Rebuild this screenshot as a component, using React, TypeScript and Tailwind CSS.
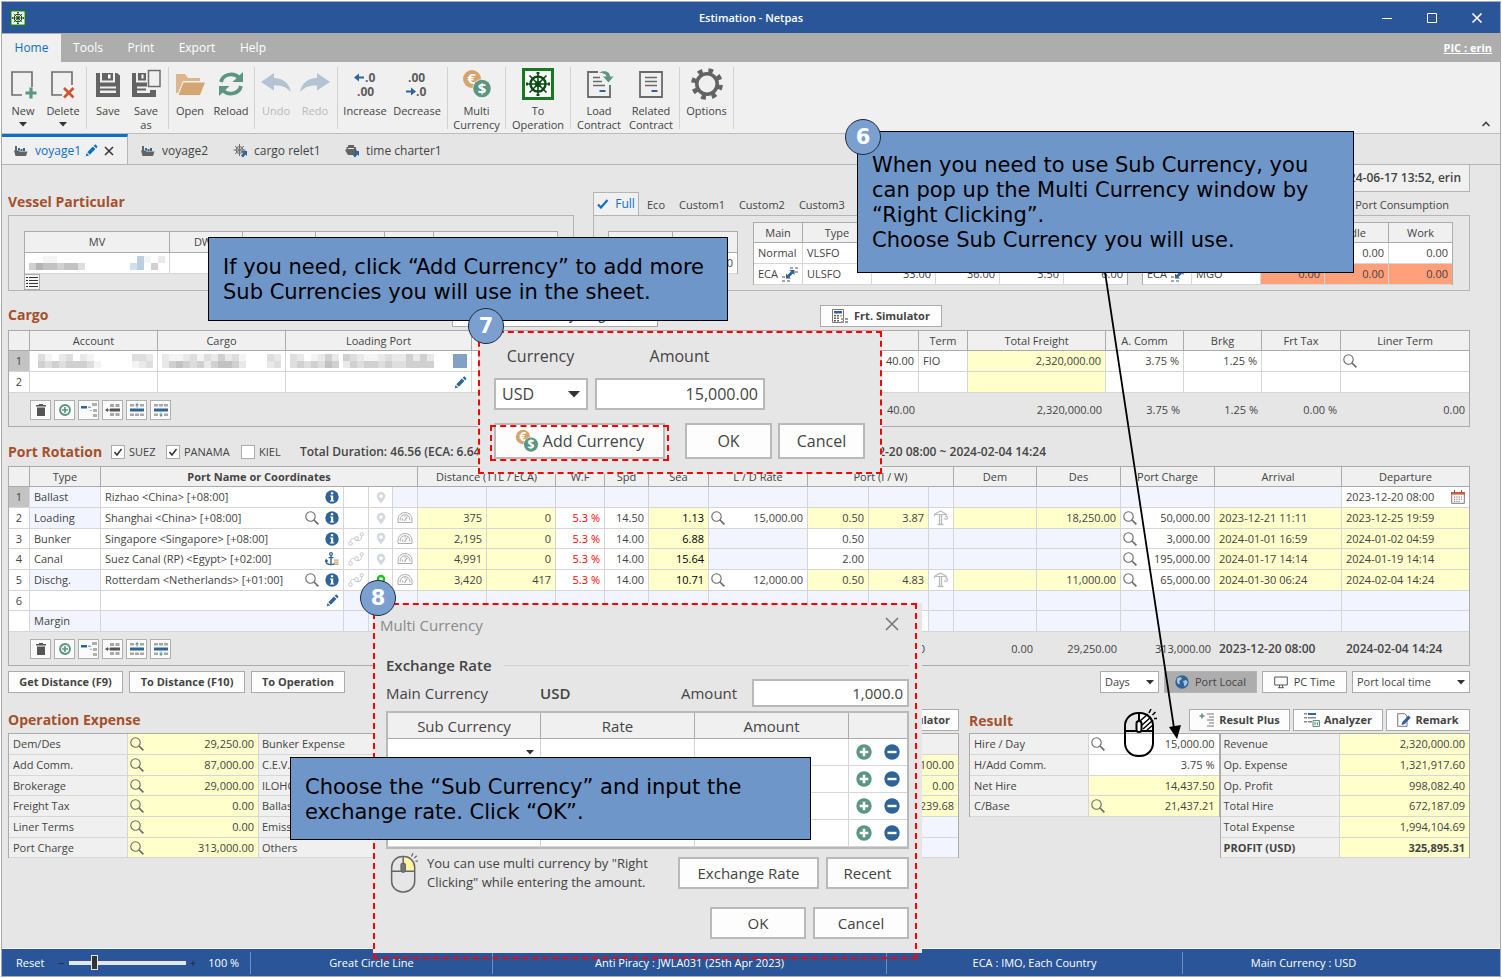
import React, { useState } from "react";
import clsx from "clsx";

const YELLOW = "bg-[#ffffcb]";
const LAV = "bg-[#f2f5ff]";
const WHITE = "bg-white";

/* ---------- icons ---------- */

const Lens = ({ className = "" }: { className?: string }) => (
  <svg viewBox="0 0 14 14" className={clsx("size-[14px] shrink-0", className)} fill="none" stroke="#6b6b6b">
    <circle cx="5.5" cy="5.5" r="4.7" strokeWidth="1.1" />
    <path d="M9 9l4.4 4.4" strokeWidth="1.7" />
  </svg>
);

const Info = () => (
  <svg viewBox="0 0 14 14" className="size-[14px] shrink-0">
    <circle cx="7" cy="7" r="6.7" fill="#2f6499" />
    <path d="M5.9 2.3h2.3v2H5.9zM5 5.5h3.2v5H9.2v1.1H5v-1.1h1V6.6H5z" fill="#fff" />
  </svg>
);

const Pencil = ({ color = "#2f6499" }: { color?: string }) => (
  <svg viewBox="0 0 14 14" className="size-[13px] shrink-0" fill={color}>
    <path d="M.8 13.2l.9-3.6 2.7 2.7zM2.500 8.800l6-6 2.700 2.700-6 6zM9.300 2l1-1c.5-.5 1.100-.5 1.600 0l1.100 1.100c.5.5.5 1.100 0 1.600l-1 1z" />
  </svg>
);

const Anchor = () => (
  <svg viewBox="0 0 14 14" className="size-[14px] shrink-0" fill="none">
    <circle cx="6" cy="2" r="1.4" stroke="#2f6499" strokeWidth="1.2" />
    <path d="M6 3.4v9M3.6 5.6h4.8M1 8.4c0 2.800 2 4.200 5 4.200s3-.6 3.500-1.200M0 9.800l1.200-2 1.600 1.700" stroke="#2f6499" strokeWidth="1.4" />
    <path d="M9 7.500h4.500v1.300H9zM9 9.500h4.500v1.300H9zM9 11.500h4.500v1.500H9z" fill="#d8a567" />
  </svg>
);

const RouteIcon = () => (
  <svg viewBox="0 0 16 14" className="mx-auto h-[14px] w-4" fill="none" stroke="#c4c6c9">
    <circle cx="2.500" cy="11.500" r="1.800" />
    <circle cx="8.500" cy="6.500" r="1.900" />
    <circle cx="13.700" cy="2.200" r="1.600" />
    <path d="M2.500 9.500c0-3 1.500-3 4-3M8.500 8.500c4 .5 5-1 5-4.500" />
  </svg>
);

const Pin = ({ color = "#d3d9e0" }: { color?: string }) => (
  <svg viewBox="0 0 12 14" className="mx-auto h-[13px] w-3">
    <path fillRule="evenodd" fill={color} d="M6 .8a4.600 4.600 0 0 1 4.600 4.600C10.600 8.500 6 13.200 6 13.200S1.400 8.500 1.400 5.400A4.600 4.600 0 0 1 6 .8zM6 3.400a2 2 0 1 0 0 4 2 2 0 0 0 0-4z" />
  </svg>
);

const Gauge = () => (
  <svg viewBox="0 0 16 14" className="mx-auto h-[14px] w-4" fill="none" stroke="#adadad">
    <path d="M1 11.500V8a7 6.500 0 0 1 14 0v3.500zM3.200 9.500V8a4.800 4.300 0 0 1 9.600 0v1.500" />
    <path d="M7.500 10l2.800-4.500M5.500 9.500V7.500M8 5.500v-1" strokeWidth="1.300" />
  </svg>
);

const Crane = () => (
  <svg viewBox="0 0 16 16" className="mx-auto size-4" fill="none" stroke="#b9bcc0">
    <path d="M6.500 14V4M8.500 14V4M4.500 14.500h6" strokeWidth="1.300" />
    <path d="M1 6l1-2 5.500-3L13 4M1 4.500h13M13 4v3.500M11.500 8c0 2 3 2 3 0s-1.500-1.500-1.500-1.500" strokeWidth="1.200" />
  </svg>
);

const Calendar = () => (
  <svg viewBox="0 0 14 14" className="size-[14px] shrink-0" fill="none">
    <path d="M.7 2.500h12.600v10.800H.7z" stroke="#777" fill="#fff" />
    <path d="M.2 2h13.600v2.600H.2z" fill="#cf5b3c" />
    <path d="M3.500 0v3M10.500 0v3" stroke="#666" />
    <path d="M3 7h8M3 9.200h8M3 11.400h6" stroke="#777" strokeDasharray="1.300 1" />
  </svg>
);

const Swap = () => (
  <svg viewBox="0 0 16 15" className="h-[15px] w-4 shrink-0">
    <path d="M8 0h3v2H8zM13 0h3v2h-3zM13 4h3v2h-3zM0 9h3v2H0zM0 13h3v2H0zM5 13h3v2H5z" fill="#a9a9a9" />
    <path d="M12.500 3v5L11 6.500 7.500 10 9 11.500H4v-5L5.500 8 9 4.500 7.500 3z" fill="#2f6499" />
  </svg>
);

const Coins = ({ className = "size-[30px]" }: { className?: string }) => (
  <svg viewBox="0 0 30 30" className={className}>
    <circle cx="10" cy="10" r="9" fill="#d8a46c" />
    <text x="9.500" y="15" fontSize="15" fontWeight="700" fill="#fff" textAnchor="middle" fontFamily="Open Sans, sans-serif">€</text>
    <circle cx="20" cy="19.500" r="9.500" fill="#f0f0f0" />
    <circle cx="20" cy="19.500" r="8.800" fill="#5b9680" />
    <text x="20" y="25" fontSize="15" fontWeight="700" fill="#fff" textAnchor="middle" fontFamily="Open Sans, sans-serif">$</text>
  </svg>
);

const Wheel = ({ className }: { className: string }) => (
  <svg viewBox="0 0 32 32" className={className} fill="none" stroke="#0a4d12">
    <rect x="1.500" y="1.500" width="29" height="29" fill="#fff" stroke="#157a22" strokeWidth="3" />
    <circle cx="16" cy="16" r="7.500" strokeWidth="2.400" />
    <circle cx="16" cy="16" r="2.600" fill="#0a4d12" />
    <path d="M16 4v24M4 16h24M7.500 7.500l17 17M24.500 7.500l-17 17" strokeWidth="1.600" />
    <path d="M14.500 5h3M14.500 27h3M5 14.500v3M27 14.500v3" strokeWidth="2" />
  </svg>
);

const NewIcon = () => (
  <svg viewBox="0 0 30 30" className="size-[30px]" fill="none">
    <path d="M14 26H4V3h20v15" stroke="#6d6d6d" strokeWidth="1.600" />
    <path d="M23 18.500v11M17.500 24h11" stroke="#5b9680" strokeWidth="3.200" />
  </svg>
);
const DeleteIcon = () => (
  <svg viewBox="0 0 30 30" className="size-[30px]" fill="none">
    <path d="M14 26H4V3h20v13" stroke="#6d6d6d" strokeWidth="1.600" />
    <path d="M16 19l9.500 9.500M25.500 19L16 28.500" stroke="#cd5334" strokeWidth="2.600" />
  </svg>
);
const SaveIcon = () => (
  <svg viewBox="0 0 30 30" className="size-[30px]">
    <path d="M3 4h4v9.500h15V4h2l3 2.500V28H3z" fill="#636363" />
    <path d="M9 4h11v7.500H9z" fill="#636363" />
    <path d="M15 5.500h2.500v4H15z" fill="#fff" />
    <path d="M7 17.500h16V24H7z" fill="#f0f0f0" />
    <path d="M7 19.500h16v2H7z" fill="#636363" />
  </svg>
);
const SaveAsIcon = () => (
  <svg viewBox="0 0 30 30" className="size-[30px]">
    <path d="M1 4h4v9.500h11v4H6v6.500h13v-3h6V28H1z" fill="#636363" />
    <path d="M6 19.500h9v2H6z" fill="#636363" />
    <path d="M7 4h8v7.500H7z" fill="#636363" />
    <path d="M10.500 5.500h2v4h-2z" fill="#fff" />
    <path d="M17.500 1.500h11.500v16H17.500z" fill="#f0f0f0" stroke="#6d6d6d" strokeWidth="1.500" />
  </svg>
);
const OpenIcon = () => (
  <svg viewBox="0 0 30 30" className="size-[30px]">
    <path d="M1 5h9l3 4h12v3H8L3 24H1z" fill="#dcb78d" />
    <path d="M8.500 13.500H30L25 26H3.500z" fill="#d6a672" />
  </svg>
);
const ReloadIcon = () => (
  <svg viewBox="0 0 30 30" className="size-[30px]" fill="none" stroke="#5b9680" strokeWidth="3.800">
    <path d="M5 13a10.500 9.500 0 0 1 18-4.500" />
    <path d="M25 17a10.500 9.500 0 0 1-18 4.500" />
    <path d="M27 3v10H16.500zM3 27V17h10.500z" fill="#5b9680" stroke="none" />
  </svg>
);
const UndoIcon = ({ flip = false }: { flip?: boolean }) => (
  <svg viewBox="0 0 32 30" className={clsx("h-[30px] w-8", flip && "-scale-x-100")}>
    <path d="M1 13L14 4v5c9 0 15 5 17 14-5-5-9-7-17-6.500v5z" fill="#b3c3d4" />
  </svg>
);
const DecimalIcon = ({ dir }: { dir: "inc" | "dec" }) => (
  <svg viewBox="0 0 30 30" className="size-[30px]" fontFamily="Open Sans, sans-serif" fontSize="12" fontWeight="700">
    <text x={dir === "inc" ? 15 : 6} y="13" fill="#5c5c5c">{dir === "inc" ? ".0" : ".00"}</text>
    <text x={dir === "inc" ? 7 : 14} y="27" fill="#5c5c5c">{dir === "inc" ? ".00" : ".0"}</text>
    {dir === "inc" ? (
      <path d="M4 8.500l5-4v3h5v2H9v3z" fill="#2f6499" />
    ) : (
      <path d="M14 22.500l-5-4v3H4v2h5v3z" fill="#2f6499" />
    )}
  </svg>
);
const ContractIcon = ({ load = false }: { load?: boolean }) => (
  <svg viewBox="0 0 30 30" className="size-[30px]" fill="none" stroke="#6a6a6a">
    {load ? <path d="M14 3H4v25h22V16" strokeWidth="1.800" /> : <path d="M4 3h22v25H4z" strokeWidth="1.800" />}
    <path d={load ? "M9 8.500h7M9 12.500h9M9 16.500h12" : "M9 8.500h12M9 12.500h12M9 16.500h12"} strokeWidth="1.400" />
    <path d="M15.500 22h6" stroke="#2f6499" strokeWidth="2" />
    {load && <path d="M15 3.500c7-3 11 0 11 4h3.500L24.500 13.500 19 7.500h3.500c0-2-3-3.500-7.500-4z" fill="#5b9680" stroke="none" />}
  </svg>
);
const GearIcon = () => (
  <svg viewBox="0 0 32 32" className="size-8" fill="none" stroke="#636363">
    <circle cx="16" cy="16" r="10.200" strokeWidth="3.600" />
    <circle cx="16" cy="16" r="13.600" strokeWidth="4.600" strokeDasharray="4.700 5.980" strokeDashoffset="-1" />
  </svg>
);

const ShipIcon = () => (
  <svg viewBox="0 0 14 12" className="h-3 w-3.5">
    <path d="M0 5.500h4.500l1 1h8L12 11H1.500z" fill="#636363" />
    <path d="M1 1h2v5H1z" fill="#636363" />
    <path d="M4 3h2v2.500H4zM6.500 4h2v2h-2zM9 3h2v3H9z" fill="#2f6499" />
  </svg>
);
const ReletIcon = () => (
  <svg viewBox="0 0 14 14" className="size-3.5" fill="none" stroke="#707070">
    <circle cx="6.500" cy="6" r="3.500" />
    <path d="M6.500 0v12M.5 6h12M2 2l9 8M11 2l-9 8" />
    <path d="M14 7v5L12.500 10.500 10 13.500 8 11.500 10.500 9 9 7z" fill="#2f6499" stroke="none" />
  </svg>
);
const CharterIcon = () => (
  <svg viewBox="0 0 14 14" className="size-3.5">
    <path d="M3 1h6v2h2v2.500l1 .5-2 5H3L0 6l1.500-.5V3H3z" fill="#636363" />
    <path d="M3 4h6v1H3z" fill="#e5e5e5" />
    <path d="M14 7v5L12.500 10.500 10 13.500 8 11.500 10.500 9 9 7z" fill="#2f6499" />
  </svg>
);

const Globe = () => (
  <svg viewBox="0 0 14 14" className="size-[14px]">
    <circle cx="7" cy="7" r="6.700" fill="#2f6499" />
    <path d="M2 3.500l3-1.500 2 1-1 2-2 1 1 2-1 1.500-2-2zM8 6l3-1 1.800 2-1.500 3-2 1.500-.5-3z" fill="#a8c4dc" />
  </svg>
);
const Monitor = () => (
  <svg viewBox="0 0 14 14" className="size-[14px]" fill="none" stroke="#555">
    <path d="M.7 2h12.600v8H.7zM5.500 10v2.500M8.500 10v2.500M4 12.700h6" />
  </svg>
);
const CalcIcon = () => (
  <svg viewBox="0 0 16 14" className="h-[14px] w-4">
    <path d="M.5.500h11v13H.5z" fill="#fff" stroke="#777" />
    <path d="M2 2h8v2.500H2z" fill="#2f6499" />
    <path d="M2 6h2v1.500H2zM5 6h2v1.500H5zM2 8.500h2V10H2zM5 8.500h2V10H5zM2 11h2v1.500H2zM5 11h2v1.500H5z" fill="#636363" />
    <path d="M8 6h2v1.500H8z" fill="#d8a46c" />
    <path d="M9 9h3v2H9zM13 9h3v2h-3zM9 12h3v2H9zM13 12h3v2h-3z" fill="#9a9a9a" />
  </svg>
);
const PlusListIcon = () => (
  <svg viewBox="0 0 16 14" className="h-[14px] w-4" fill="none">
    <path d="M3 .5v5M.5 3h5" stroke="#5b9680" strokeWidth="1.600" />
    <path d="M8 1h7M10 4h5M8 7h7M10 10h5M8 13h7" stroke="#777" />
  </svg>
);
const AnalyzerIcon = () => (
  <svg viewBox="0 0 16 14" className="h-[14px] w-4">
    <path d="M0 0h3v1.500H0zM0 4h3v1.500H0zM0 8h3v1.500H0zM4 4h8v1.500H4zM4 8h4v1.500H4z" fill="#888" />
    <path d="M4 0h8v2H4z" fill="#2f6499" />
    <path d="M9 7.500h6.500v6H9z" fill="#e9f2ee" stroke="#5b9680" />
    <path d="M11 9v3M13.500 9.500v2.500" stroke="#5b9680" />
  </svg>
);
const RemarkIcon = () => (
  <svg viewBox="0 0 14 14" className="size-[14px]">
    <path d="M.7.700h7L10 3v10.300H.7z" fill="#fff" stroke="#777" />
    <path d="M4.500 12l.8-3L11.500 2.500 13.700 4.700 7.500 11.200z" fill="#2f6499" />
  </svg>
);

const PlusBall = ({ className = "size-[14px]" }: { className?: string }) => (
  <svg viewBox="0 0 16 16" className={className}>
    <circle cx="8" cy="8" r="6.600" fill="none" stroke="#5b9680" strokeWidth="2.600" />
    <path d="M8 4v8M4 8h8" stroke="#5b9680" strokeWidth="2.200" />
  </svg>
);
const PlusSolid = () => (
  <svg viewBox="0 0 16 16" className="size-4">
    <circle cx="8" cy="8" r="7.700" fill="#5b9680" />
    <path d="M8 3.700v8.600M3.700 8h8.600" stroke="#fff" strokeWidth="2.600" />
  </svg>
);
const MinusSolid = () => (
  <svg viewBox="0 0 16 16" className="size-4">
    <circle cx="8" cy="8" r="7.700" fill="#2f6499" />
    <path d="M3.500 8h9" stroke="#fff" strokeWidth="2.400" />
  </svg>
);

const MouseIcon = ({ className, bold = false }: { className: string; bold?: boolean }) => (
  <svg viewBox="0 0 34 48" className={className} fill="none" stroke={bold ? "#000" : "#666"} strokeWidth={bold ? 2 : 1.8}>
    <path d="M16 3.500c8 0 14 5 14 13V21H16z" fill={bold ? "#fff" : "#fff3a0"} stroke="none" />
    {bold && <path d="M17 12l8-7M18 17L28 8M20 20l10-9M24 21l6-5" strokeWidth="1.500" />}
    <rect x="2" y="4" width="28" height="43" rx="13" fill={bold ? "none" : "transparent"} />
    <path d="M2 22h28M16 4v18" />
    <rect x="13.500" y="12" width="5" height="11" rx="2.500" fill={bold ? "#fff" : "#777"} />
    <path d="M26 4l2-4M29.500 6l3-3M31 9.500h3" strokeWidth="1.500" />
  </svg>
);

/* ---------- pixelated (hidden) names ---------- */

const SHADES = ["transparent", "#f4f4f4", "#e9e9e9", "#dedede", "#d0d0d0", "#c2c2c2", "#b4b4b4", "#bccfe2", "#d3dfec", "#82a2c4"];

const Mosaic = ({ rows }: { rows: string[] }) => (
  <svg width={rows[0].length * 7} height={rows.length * 7} className="shrink-0" shapeRendering="crispEdges">
    {rows.map((row, y) =>
      [...row].map((d, x) => <rect key={`${x}-${y}`} x={x * 7} y={y * 7} width="7" height="7" fill={SHADES[Number(d)]} />)
    )}
  </svg>
);

/* ---------- small building blocks ---------- */

const Th = ({ children, className = "", ...rest }: React.ThHTMLAttributes<HTMLTableCellElement>) => (
  <th
    className={clsx("border-r border-b border-[#ababab] bg-[#f0f0f0] p-0 text-center last:border-r-0", className || "font-normal")}
    {...rest}
  >
    {children}
  </th>
);

const Td = ({ children, className = "", ...rest }: React.TdHTMLAttributes<HTMLTableCellElement>) => (
  <td className={clsx("border-r border-b border-[#d6d6d6] px-1 py-0 whitespace-nowrap last:border-r-0", className)} {...rest}>
    {children}
  </td>
);

const Cols = ({ widths }: { widths: (number | null)[] }) => (
  <colgroup>
    {widths.map((w, i) => (
      <col key={i} style={w ? { width: w } : undefined} />
    ))}
  </colgroup>
);

const rowH = (i: number) => (i % 3 === 2 ? "h-5" : "h-[21px]");

const Heading = ({ children }: { children: React.ReactNode }) => (
  <h2 className="text-[14px] leading-5 font-bold whitespace-nowrap text-[#a5502b]">{children}</h2>
);

const Btn = ({ children, className = "", pressed = false }: { children: React.ReactNode; className?: string; pressed?: boolean }) => (
  <button
    className={clsx(
      "flex h-[22px] shrink-0 items-center justify-center gap-1 border text-[11px] whitespace-nowrap",
      pressed ? "border-[#b5b5b5] bg-[#adadad]" : "border-[#ababab] bg-[#fdfdfd]",
      className
    )}
  >
    {children}
  </button>
);

const Caret = () => (
  <svg viewBox="0 0 8 5" className="pointer-events-none h-[5px] w-2">
    <path d="M0 0h8L4 4.500z" fill="#333" />
  </svg>
);

const Select = ({ label, value, className }: { label: string; value: string; className: string }) => (
  <div className={clsx("relative flex items-center border border-[#ababab] bg-white", className)}>
    <select aria-label={label} className="h-full w-full appearance-none bg-transparent pl-1 outline-none">
      <option>{value}</option>
    </select>
    <span className="pointer-events-none absolute right-1">
      <Caret />
    </span>
  </div>
);

const toolIcons = [
  <svg key="t" viewBox="0 0 16 14" className="h-[14px] w-4" fill="#555"><path d="M3 2h3V1h4v1h3v1.500H3zM4 4.500h8V13H4z" /></svg>,
  <PlusBall key="p" className="size-3" />,
  <svg key="a" viewBox="0 0 16 14" className="h-[14px] w-4"><path d="M0 3h6v2.500H0z" fill="#2f6499" /><path d="M7 4.200h3" stroke="#5b9680" /><path d="M11 0h5v3h-5zM12 6h4v3h-4zM12 11h4v3h-4zM9 7h2v1H9z" fill="#b0b0b0" /></svg>,
  <svg key="b" viewBox="0 0 16 14" className="h-[14px] w-4"><path d="M0 7l3-2v4zM5 5.500h10v3H5zM2 6.500h3v1H2z" fill="#555" /><path d="M5 1h4v3H5zM10.500 1h4v3h-4zM5 10h4v3H5zM10.500 10h4v3h-4z" fill="#a8a8a8" /></svg>,
  <svg key="c" viewBox="0 0 16 14" className="h-[14px] w-4"><path d="M1 5.500h14v3H1z" fill="#2f6499" /><path d="M1 1h4v2.500H1zM11 1h4v2.500h-4zM1 10.500h4V13H1zM6 10.500h4V13H6zM11 10.500h4V13h-4z" fill="#a8a8a8" /><path d="M8 0l2 2.500H8.500v2h-1v-2H6z" fill="#5b9680" /></svg>,
  <svg key="d" viewBox="0 0 16 14" className="h-[14px] w-4"><path d="M1 5.500h14v3H1z" fill="#2f6499" /><path d="M1 1h4v2.500H1zM6 1h4v2.500H6zM11 1h4v2.500h-4zM1 10.500h4V13H1zM11 10.500h4V13h-4z" fill="#a8a8a8" /><path d="M8 14l2-2.500H8.500v-2h-1v2H6z" fill="#5b9680" /></svg>,
];

const RowTools = () => (
  <div className="flex gap-[3px]">
    {toolIcons.map((icon, i) => (
      <button key={i} aria-label={`Row tool ${i + 1}`} className="flex h-[20px] w-[21px] items-center justify-center border border-[#b0b0b0] bg-[#fbfbfb]">
        {icon}
      </button>
    ))}
  </div>
);

/* ---------- header ---------- */

interface RibbonItem {
  label: string;
  icon: React.ReactNode;
  w: string;
  arrow?: boolean;
  disabled?: boolean;
}

const ribbon: { w: string; items: RibbonItem[] }[] = [
  { w: "w-[85px]", items: [{ label: "New", icon: <NewIcon />, w: "w-[42px]", arrow: true }, { label: "Delete", icon: <DeleteIcon />, w: "w-[38px]", arrow: true }] },
  { w: "w-[82px]", items: [{ label: "Save", icon: <SaveIcon />, w: "w-[42px]" }, { label: "Save\nas", icon: <SaveAsIcon />, w: "w-[34px]" }] },
  { w: "w-[86px]", items: [{ label: "Open", icon: <OpenIcon />, w: "w-[42px]" }, { label: "Reload", icon: <ReloadIcon />, w: "w-[40px]" }] },
  { w: "w-[83px]", items: [{ label: "Undo", icon: <UndoIcon />, w: "w-[42px]", disabled: true }, { label: "Redo", icon: <UndoIcon flip />, w: "w-[36px]", disabled: true }] },
  { w: "w-[110px]", items: [{ label: "Increase", icon: <DecimalIcon dir="inc" />, w: "w-[54px]" }, { label: "Decrease", icon: <DecimalIcon dir="dec" />, w: "w-[50px]" }] },
  { w: "w-[58px]", items: [{ label: "Multi\nCurrency", icon: <Coins />, w: "w-[57px]" }] },
  { w: "w-[65px]", items: [{ label: "To\nOperation", icon: <Wheel className="size-8" />, w: "w-[64px]" }] },
  { w: "w-[109px]", items: [{ label: "Load\nContract", icon: <ContractIcon load />, w: "w-[56px]" }, { label: "Related\nContract", icon: <ContractIcon />, w: "w-[48px]" }] },
  { w: "w-[54px]", items: [{ label: "Options", icon: <GearIcon />, w: "w-[53px]" }] },
];

function Header() {
  return (
    <header>
      <div className="grid h-[31px] grid-cols-[1fr_auto_1fr] items-center bg-[#2a5699] text-white">
        <Wheel className="ml-2 size-4" />
        <h1 className="text-[11px] font-semibold">Estimation - Netpas</h1>
        <div className="flex justify-end">
          <button aria-label="Minimize" className="flex w-[45px] justify-center">
            <svg viewBox="0 0 12 12" className="size-3" stroke="#fff"><path d="M1 6.500h10" /></svg>
          </button>
          <button aria-label="Maximize" className="flex w-[45px] justify-center">
            <svg viewBox="0 0 12 12" className="size-3" stroke="#fff" fill="none"><path d="M1.500 1.500h9v9h-9z" /></svg>
          </button>
          <button aria-label="Close" className="flex w-[46px] justify-center">
            <svg viewBox="0 0 12 12" className="size-3" stroke="#fff" strokeWidth="1.600"><path d="M1.500 1.500l9 9M10.500 1.500l-9 9" /></svg>
          </button>
        </div>
      </div>

      <nav className="flex h-[29px] items-center bg-[#adadad] pt-px text-[12px] text-white">
        <a href="#home" className="flex h-full w-[59px] items-center justify-center bg-[#f0f0f0] text-[#0f6fc6]">Home</a>
        <a href="#tools" className="w-[54px] text-center">Tools</a>
        <a href="#print" className="w-[52px] text-center">Print</a>
        <a href="#export" className="w-[60px] text-center">Export</a>
        <a href="#help" className="w-[52px] text-center">Help</a>
        <a href="#pic" className="mr-2 ml-auto text-[11px] font-bold underline">PIC : erin</a>
      </nav>

      <div className="flex h-[72px] border-b border-[#bdbdbd] bg-[#f0f0f0] pt-[5px]">
        {ribbon.map((group, g) => (
          <div key={g} className={clsx("flex h-[62px] items-start border-r border-[#d2d2d2]", group.w)}>
            {group.items.map((item) => (
              <button key={item.label} disabled={item.disabled} className={clsx("flex h-[66px] flex-col items-center", item.w)}>
                <span className="flex h-[34px] items-center">{item.icon}</span>
                <span className={clsx("mt-[3px] text-[11px] leading-[14px] whitespace-pre", item.disabled ? "text-[#b9b9b9]" : "text-[#444]")}>
                  {item.label}
                </span>
                {item.arrow && <span className="mt-1"><Caret /></span>}
              </button>
            ))}
          </div>
        ))}
        <button aria-label="Collapse ribbon" className="mt-auto mr-[9px] mb-1.5 ml-auto">
          <svg viewBox="0 0 10 6" className="h-1.5 w-2.5" fill="none" stroke="#444" strokeWidth="1.600"><path d="M1.500 5L5 1.500 8.500 5" /></svg>
        </button>
      </div>

      <div className="flex h-[31px] border-b border-[#b5b5b5] bg-[#e5e5e5] text-[12px]">
        <div className="flex w-[126px] items-center border-t-[3px] border-r border-t-[#0f6fc6] border-r-[#b5b5b5] bg-[#f0f0f0] pl-[12px]">
          <ShipIcon />
          <span className="ml-[7px] text-[#0f6fc6]">voyage1</span>
          <span className="ml-1"><Pencil color="#0f6fc6" /></span>
          <button aria-label="Close voyage1" className="ml-1.5">
            <svg viewBox="0 0 10 10" className="size-2.5" stroke="#333" strokeWidth="1.500"><path d="M1 1l8 8M9 1L1 9" /></svg>
          </button>
        </div>
        <button className="flex w-[92px] items-center gap-[7px] pt-[3px] pl-[13px]"><ShipIcon />voyage2</button>
        <button className="flex w-[112px] items-center gap-[7px] pt-[3px] pl-[13px] whitespace-nowrap"><ReletIcon />cargo relet1</button>
        <button className="flex items-center gap-[7px] pt-[3px] pl-[13px] whitespace-nowrap"><CharterIcon />time charter1</button>
      </div>
    </header>
  );
}

/* ---------- vessel ---------- */

function Vessel() {
  return (
    <section className="flex gap-[19px]">
      <div className="w-[566px] shrink-0">
        <div className="flex h-[23px] items-start"><Heading>Vessel Particular</Heading></div>
        <div className="h-[76px] border border-[#b5b5b5] px-[15px] pt-[15px]">
          <div className="border border-b-0 border-[#ababab]">
            <table className="w-full table-fixed border-separate border-spacing-0">
              <Cols widths={[145, 73, 73, 69, 49, null]} />
              <thead>
                <tr className="h-[21px]"><Th>MV</Th><Th>DWT</Th><Th /><Th /><Th /><Th /></tr>
              </thead>
              <tbody>
                <tr className="h-[21px] bg-white">
                  <Td className="px-0">
                    <div className="flex justify-between">
                      <Mosaic rows={["001100000", "465545530"]} />
                      <Mosaic rows={["07102", "87040"]} />
                    </div>
                  </Td>
                  <Td className="px-0"><div className="flex justify-end"><Mosaic rows={["124", "354"]} /></div></Td>
                  <Td /><Td /><Td /><Td />
                </tr>
              </tbody>
            </table>
          </div>
          <button aria-label="Vessel list" className="flex size-[16px] items-center justify-center border border-[#ababab] bg-[#f5f5f5]">
            <svg viewBox="0 0 12 12" className="size-3" stroke="#333" strokeWidth="1.200"><path d="M0 1.500h2M3 1.500h9M0 4.500h2M3 4.500h9M0 7.500h2M3 7.500h9M0 10.500h2M3 10.500h9" /></svg>
          </button>
        </div>
      </div>

      <div className="flex-1">
        <div className="flex h-[23px] items-end text-[11px]">
          <button className="flex h-[23px] w-[46px] items-center justify-center gap-1.5 border border-b-0 border-[#b5b5b5] bg-[#f0f0f0] text-[12px] text-[#0f6fc6]">
            <svg viewBox="0 0 12 10" className="h-2.5 w-3" fill="none" stroke="#0f6fc6" strokeWidth="2.200"><path d="M1 5.500L4 8.500 10.500 1" /></svg>
            Full
          </button>
          <button className="mb-0.5 ml-2">Eco</button>
          <button className="mb-0.5 ml-3.5">Custom1</button>
          <button className="mb-0.5 ml-3.5">Custom2</button>
          <button className="mb-0.5 ml-3.5">Custom3</button>
          <span className="mr-[21px] mb-0.5 ml-auto">Port Consumption</span>
        </div>
        <div className="flex h-[76px] items-start border border-[#b5b5b5] pr-4 pl-3.5">
          <table className="mt-[15px] w-[130px] table-fixed border-separate border-spacing-0 border border-b-0 border-[#ababab]">
            <thead><tr className="h-[21px]"><Th /><Th /></tr></thead>
            <tbody><tr className="h-[21px] bg-white"><Td /><Td className="text-right">0.00</Td></tr></tbody>
          </table>
          <table className="mt-1.5 ml-[15px] w-[375px] table-fixed border-separate border-spacing-0 border border-b-0 border-[#ababab]">
            <Cols widths={[49, 69, 64, 64, 64, null]} />
            <thead><tr className="h-5"><Th>Main</Th><Th>Type</Th><Th /><Th /><Th /><Th /></tr></thead>
            <tbody className="bg-white text-right">
              <tr className="h-[21px]"><Td className="text-left">Normal</Td><Td className="text-left">VLSFO</Td><Td /><Td /><Td /><Td /></tr>
              <tr className="h-[21px]">
                <Td className="text-left"><div className="flex items-center justify-between">ECA <Swap /></div></Td>
                <Td className="text-left">ULSFO</Td><Td>33.00</Td><Td>36.00</Td><Td>3.50</Td><Td>6.00</Td>
              </tr>
            </tbody>
          </table>
          <table className="mt-1.5 ml-auto w-[311px] table-fixed border-separate border-spacing-0 border border-b-0 border-[#ababab]">
            <Cols widths={[49, 69, 64, 64, null]} />
            <thead><tr className="h-5"><Th /><Th /><Th /><Th>Idle</Th><Th>Work</Th></tr></thead>
            <tbody className="bg-white text-right">
              <tr className="h-[21px]"><Td /><Td /><Td /><Td>0.00</Td><Td>0.00</Td></tr>
              <tr className="h-[21px]">
                <Td className="text-left"><div className="flex items-center justify-between">ECA <Swap /></div></Td>
                <Td className="text-left">MGO</Td>
                <Td className="bg-[#ffa07a]">0.00</Td><Td className="bg-[#ffa07a]">0.00</Td><Td className="bg-[#ffa07a]">0.00</Td>
              </tr>
            </tbody>
          </table>
        </div>
      </div>
    </section>
  );
}

/* ---------- cargo ---------- */

function Cargo() {
  return (
    <section>
      <div className="flex h-[39px] items-end pb-[3px]">
        <div className="w-[444px] pb-0.5"><Heading>Cargo</Heading></div>
        <Btn className="w-[206px] font-bold">Multi Currency Freight</Btn>
        <Btn className="ml-[162px] w-[122px] gap-1.5 font-bold"><CalcIcon />Frt. Simulator</Btn>
      </div>
      <div className="border border-[#ababab]">
        <table className="w-full table-fixed border-separate border-spacing-0">
          <Cols widths={[21, 128, 128, 186, 150, 150, 147, 49, 138, 78, 78, 79, null]} />
          <thead>
            <tr className="h-5">
              <Th /><Th>Account</Th><Th>Cargo</Th><Th>Loading Port</Th><Th /><Th /><Th /><Th>Term</Th>
              <Th>Total Freight</Th><Th>A. Comm</Th><Th>Brkg</Th><Th>Frt Tax</Th><Th>Liner Term</Th>
            </tr>
          </thead>
          <tbody className="bg-white text-right">
            <tr className="h-[21px]">
              <Td className="bg-[#c3c3c3] px-0 text-center">1</Td>
              <Td className="px-0">
                <div className="flex justify-between pl-1">
                  <Mosaic rows={["310230210", "434344431"]} />
                  <Mosaic rows={["332", "123"]} />
                </div>
              </Td>
              <Td className="px-0">
                <div className="flex justify-between">
                  <Mosaic rows={["211231324231", "245434245542"]} />
                  <Mosaic rows={["32", "23"]} />
                </div>
              </Td>
              <Td>
                <div className="flex items-center gap-1">
                  <Mosaic rows={["3201242", "3434354"]} />
                  <Mosaic rows={["4321123224242", "2434434334444"]} />
                  <span className="ml-auto size-3.5 shrink-0 bg-[#82a2c4]" />
                </div>
              </Td>
              <Td /><Td /><Td>40.00</Td><Td className="text-left">FIO</Td>
              <Td className={YELLOW}>2,320,000.00</Td><Td>3.75 %</Td><Td>1.25 %</Td><Td />
              <Td className="pl-0.5"><Lens /></Td>
            </tr>
            <tr className="h-[21px]">
              <Td className="px-0 text-center">2</Td><Td /><Td />
              <Td><div className="flex justify-end"><Pencil /></div></Td>
              <Td /><Td /><Td /><Td /><Td className={YELLOW} /><Td /><Td /><Td /><Td />
            </tr>
          </tbody>
          <tfoot>
            <tr className="h-[33px] text-right">
              <td />
              <td colSpan={5}><RowTools /></td>
              <td className="pr-1">40.00</td><td />
              <td className="pr-1">2,320,000.00</td><td className="pr-1">3.75 %</td><td className="pr-1">1.25 %</td>
              <td className="pr-1">0.00 %</td><td className="pr-1">0.00</td>
            </tr>
          </tfoot>
        </table>
      </div>
    </section>
  );
}

/* ---------- port rotation ---------- */

interface PortRow {
  type: string;
  name: string;
  lens?: boolean;
  mark?: "info" | "anchor" | "edit";
  route?: boolean;
  pin?: string;
  sea?: string[]; // ttl, eca, w.f, spd, sea
  rate?: string;
  idle?: string;
  work?: string;
  des?: string;
  charge?: string;
  arr?: string;
  dep?: string;
}

const ports: PortRow[] = [
  { type: "Ballast", name: "Rizhao <China> [+08:00]", mark: "info", pin: "#d3d9e0", dep: "2023-12-20 08:00" },
  { type: "Loading", name: "Shanghai <China> [+08:00]", lens: true, mark: "info", pin: "#d3d9e0", sea: ["375", "0", "5.3 %", "14.50", "1.13"], rate: "15,000.00", idle: "0.50", work: "3.87", des: "18,250.00", charge: "50,000.00", arr: "2023-12-21 11:11", dep: "2023-12-25 19:59" },
  { type: "Bunker", name: "Singapore <Singapore> [+08:00]", mark: "info", route: true, pin: "#d3d9e0", sea: ["2,195", "0", "5.3 %", "14.00", "6.88"], idle: "0.50", charge: "3,000.00", arr: "2024-01-01 16:59", dep: "2024-01-02 04:59" },
  { type: "Canal", name: "Suez Canal (RP) <Egypt> [+02:00]", mark: "anchor", route: true, pin: "#d3d9e0", sea: ["4,991", "0", "5.3 %", "14.00", "15.64"], idle: "2.00", charge: "195,000.00", arr: "2024-01-17 14:14", dep: "2024-01-19 14:14" },
  { type: "Dischg.", name: "Rotterdam <Netherlands> [+01:00]", lens: true, mark: "info", route: true, pin: "#20c020", sea: ["3,420", "417", "5.3 %", "14.00", "10.71"], rate: "12,000.00", idle: "0.50", work: "4.83", des: "11,000.00", charge: "65,000.00", arr: "2024-01-30 06:24", dep: "2024-02-04 14:24" },
  { type: "", name: "", mark: "edit" },
  { type: "Margin", name: "" },
];

const CheckBox = ({ label, on }: { label: string; on: boolean }) => {
  const [checked, setChecked] = useState(on);
  return (
    <label className="flex items-center gap-[4px]">
      <span className="relative flex">
        <input type="checkbox" checked={checked} onChange={(e) => setChecked(e.target.checked)} className="size-[14px] appearance-none border border-[#ababab] bg-white" />
        {checked && (
          <svg viewBox="0 0 14 14" className="pointer-events-none absolute inset-0 size-[14px]" fill="none" stroke="#333" strokeWidth="1.500"><path d="M3.500 7l2.500 3 4.500-6" /></svg>
        )}
      </span>
      {label}
    </label>
  );
};

function PortRotation() {
  return (
    <section>
      <div className="flex h-[39px] items-end pb-1">
        <div className="flex items-center whitespace-nowrap">
          <div className="w-[103px]"><Heading>Port Rotation</Heading></div>
          <div className="w-[55px]"><CheckBox label="SUEZ" on /></div>
          <div className="w-[75px]"><CheckBox label="PANAMA" on /></div>
          <div className="w-[59px]"><CheckBox label="KIEL" on={false} /></div>
          <div className="text-[12px] font-semibold">Total Duration: 46.56 (ECA: 6.64)</div>
        </div>
        <div className="mr-[424px] mb-0.5 ml-auto text-[12px] font-semibold whitespace-nowrap">2023-12-20 08:00 ~ 2024-02-04 14:24</div>
      </div>
      <div className="border border-[#ababab]">
        <table className="w-full table-fixed border-separate border-spacing-0">
          <Cols widths={[21, 71, 243, 25, 24, 25, 69, 69, 49, 44, 60, 99, 61, 60, 25, 83, 84, 94, 127, null]} />
          <thead>
            <tr className="h-5">
              <Th /><Th>Type</Th><Th colSpan={4} className="font-bold">Port Name or Coordinates</Th>
              <Th colSpan={2}>Distance (TTL / ECA)</Th><Th>W.F</Th><Th>Spd</Th><Th>Sea</Th><Th>L / D Rate</Th>
              <Th colSpan={3}>Port (I / W)</Th><Th>Dem</Th><Th>Des</Th><Th>Port Charge</Th><Th>Arrival</Th><Th>Departure</Th>
            </tr>
          </thead>
          <tbody className="text-right">
            {ports.map((p, i) => {
              const sail = !!p.sea;
              const rated = !!p.rate;
              return (
                <tr key={i} className={rowH(i)}>
                  <Td className={clsx("px-0 text-center", i === 0 ? "bg-[#c3c3c3]" : WHITE)}>{i < 6 && i + 1}</Td>
                  <Td className={clsx("text-left", i === 2 || i === 3 || i === 5 ? WHITE : LAV)}>{p.type}</Td>
                  <Td className={i === 6 ? LAV : WHITE}>
                    <div className="flex items-center gap-1.5">
                      <span className="mr-auto">{p.name}</span>
                      {p.lens && <Lens />}
                      {p.mark === "info" && <Info />}
                      {p.mark === "anchor" && <Anchor />}
                      {p.mark === "edit" && <Pencil />}
                    </div>
                  </Td>
                  <Td className={clsx("px-0", i > 4 ? LAV : WHITE)}>{p.route && <RouteIcon />}</Td>
                  <Td className={clsx("px-0", p.pin ? WHITE : LAV)}>{p.pin && <Pin color={p.pin} />}</Td>
                  <Td className={clsx("px-0", sail ? WHITE : LAV)}>{sail && <Gauge />}</Td>
                  <Td className={sail ? YELLOW : LAV}>{p.sea?.[0]}</Td>
                  <Td className={sail ? YELLOW : LAV}>{p.sea?.[1]}</Td>
                  <Td className={clsx("text-[#f00]", sail ? WHITE : LAV)}>{p.sea?.[2]}</Td>
                  <Td className={sail ? WHITE : LAV}>{p.sea?.[3]}</Td>
                  <Td className={clsx("text-black", sail ? YELLOW : LAV)}>{p.sea?.[4]}</Td>
                  <Td className={clsx("pl-0.5", rated ? WHITE : LAV)}>
                    {rated && <div className="flex items-center justify-between"><Lens />{p.rate}</div>}
                  </Td>
                  <Td className={rated ? YELLOW : sail ? WHITE : LAV}>{p.idle}</Td>
                  <Td className={rated ? YELLOW : i === 6 ? WHITE : LAV}>{p.work}</Td>
                  <Td className={clsx("px-0", rated ? WHITE : LAV)}>{rated && <Crane />}</Td>
                  <Td className={rated ? YELLOW : LAV} />
                  <Td className={rated ? YELLOW : LAV}>{p.des}</Td>
                  <Td className={clsx("pl-0.5", p.charge ? WHITE : LAV)}>
                    {p.charge && <div className="flex items-center justify-between"><Lens />{p.charge}</div>}
                  </Td>
                  <Td className={clsx("text-left", p.arr ? YELLOW : LAV)}>{p.arr}</Td>
                  <Td className={clsx("text-left", p.arr ? YELLOW : p.dep ? WHITE : LAV)}>
                    <div className="flex items-center justify-between">{p.dep}{i === 0 && <Calendar />}</div>
                  </Td>
                </tr>
              );
            })}
          </tbody>
          <tfoot>
            <tr className="h-[33px] text-right">
              <td />
              <td colSpan={12}><RowTools /></td>
              <td className="pr-1">8.70</td><td />
              <td className="pr-1">0.00</td><td className="pr-1">29,250.00</td><td className="pr-1">313,000.00</td>
              <td className="pl-1 text-left text-[12px] font-semibold whitespace-nowrap">2023-12-20 08:00</td>
              <td className="pl-1 text-left text-[12px] font-semibold whitespace-nowrap">2024-02-04 14:24</td>
            </tr>
          </tfoot>
        </table>
      </div>
      <div className="mt-[5px] flex gap-1.5">
        <Btn className="w-[115px] font-bold">Get Distance (F9)</Btn>
        <Btn className="w-[116px] font-bold">To Distance (F10)</Btn>
        <Btn className="w-[94px] font-bold">To Operation</Btn>
        <div className="ml-auto flex gap-[5px]">
          <Select label="Unit" value="Days" className="h-[22px] w-[59px]" />
          <Btn className="w-[93px] gap-1.5" pressed><Globe />Port Local</Btn>
          <Btn className="w-[85px] gap-1.5"><Monitor />PC Time</Btn>
          <Select label="Time zone" value="Port local time" className="h-[22px] w-[118px]" />
        </div>
      </div>
    </section>
  );
}

/* ---------- bottom tables ---------- */

const ops = [
  ["Dem/Des", "29,250.00", "Bunker Expense"],
  ["Add Comm.", "87,000.00", "C.E.V."],
  ["Brokerage", "29,000.00", "ILOHC"],
  ["Freight Tax", "0.00", "Ballast"],
  ["Liner Terms", "0.00", "Emission"],
  ["Port Charge", "313,000.00", "Others"],
];

const bunker = ["", "100.00", "0.00", "239.68", "", ""];

const hire = [
  { k: "Hire / Day", v: "15,000.00", bg: WHITE, lens: true },
  { k: "H/Add Comm.", v: "3.75 %", bg: WHITE, lens: false },
  { k: "Net Hire", v: "14,437.50", bg: YELLOW, lens: false },
  { k: "C/Base", v: "21,437.21", bg: YELLOW, lens: true },
];

const result = [
  ["Revenue", "2,320,000.00"],
  ["Op. Expense", "1,321,917.60"],
  ["Op. Profit", "998,082.40"],
  ["Total Hire", "672,187.09"],
  ["Total Expense", "1,994,104.69"],
  ["PROFIT (USD)", "325,895.31"],
];

const GRID = "table-fixed border-separate border-spacing-0 border border-b-0 border-[#ababab]";

function Bottom() {
  return (
    <div className="flex">
      <section className="w-[502px]">
        <div className="flex h-[40px] items-end pb-[3px]"><Heading>Operation Expense</Heading></div>
        <table className={clsx("w-full", GRID)}>
          <Cols widths={[119, 131, 119, null]} />
          <tbody>
            {ops.map(([k, v, k2], i) => (
              <tr key={k} className={rowH(i)}>
                <Td className="bg-[#f0f0f0]">{k}</Td>
                <Td className={clsx("pl-0.5", YELLOW)}><div className="flex items-center justify-between"><Lens />{v}</div></Td>
                <Td className="bg-[#f0f0f0] pl-[3px]">{k2}</Td>
                <Td className={YELLOW} />
              </tr>
            ))}
          </tbody>
        </table>
      </section>

      <section className="ml-3 w-[437px]">
        <div className="flex h-[40px] items-end justify-end pb-0.5"><Btn className="w-[108px] justify-end pr-2 font-bold">Simulator</Btn></div>
        <table className={clsx("w-full", GRID)}>
          <tbody>
            {bunker.map((v, i) => (
              <tr key={i} className={rowH(i)}>
                <Td className={clsx("text-right", i === 0 ? "bg-[#f0f0f0]" : v ? YELLOW : LAV)}>{v}</Td>
              </tr>
            ))}
          </tbody>
        </table>
      </section>

      <section className="ml-2.5 flex-1">
        <div className="flex h-[40px] items-end gap-[3px] pb-0.5">
          <div className="mr-auto"><Heading>Result</Heading></div>
          <Btn className="w-[101px] font-bold"><PlusListIcon />Result Plus</Btn>
          <Btn className="w-[90px] font-bold"><AnalyzerIcon />Analyzer</Btn>
          <Btn className="w-[84px] font-bold"><RemarkIcon />Remark</Btn>
        </div>
        <div className="flex items-start">
          <table className={clsx("flex-1", GRID)}>
            <Cols widths={[119, null]} />
            <tbody>
              {hire.map((r, i) => (
                <tr key={r.k} className={rowH(i)}>
                  <Td className="bg-[#f0f0f0]">{r.k}</Td>
                  <Td className={clsx("pl-0.5 text-right", r.bg)}>
                    <div className="flex items-center">{r.lens && <Lens />}<span className="ml-auto">{r.v}</span></div>
                  </Td>
                </tr>
              ))}
            </tbody>
          </table>
          <table className={clsx("flex-1", GRID)}>
            <Cols widths={[119, null]} />
            <tbody>
              {result.map(([k, v], i) => (
                <tr key={k} className={clsx(rowH(i), i === 5 && "font-bold")}>
                  <Td className="bg-[#f0f0f0] pl-[3px]">{k}</Td>
                  <Td className={clsx("text-right", YELLOW)}>{v}</Td>
                </tr>
              ))}
            </tbody>
          </table>
        </div>
      </section>
    </div>
  );
}

function StatusBar() {
  const [zoom, setZoom] = useState(20);
  return (
    <footer className="flex h-7 items-center border-t border-[#f5f5f5] bg-[#2a5699] text-[11px] text-white">
      <div className="flex w-[248px] items-center pl-3.5">
        <button className="w-[42px] text-left">Reset</button>
        <span className="w-[11px] text-[#222]">−</span>
        <input
          type="range"
          aria-label="Zoom"
          value={zoom}
          onChange={(e) => setZoom(Number(e.target.value))}
          className="h-1 w-[117px] appearance-none bg-[#e6e6e6] [&::-webkit-slider-thumb]:h-[15px] [&::-webkit-slider-thumb]:w-[7px] [&::-webkit-slider-thumb]:appearance-none [&::-webkit-slider-thumb]:border [&::-webkit-slider-thumb]:border-[#e6e6e6] [&::-webkit-slider-thumb]:bg-[#333]"
        />
        <span className="ml-1 text-[#222]">+</span>
        <span className="ml-3">100 %</span>
      </div>
      <div className="flex h-[22px] w-[242px] items-center justify-center border-l border-[#6f8fbf] font-medium">Great Circle Line</div>
      <div className="flex h-[22px] w-[394px] items-center justify-center border-l border-[#6f8fbf] font-medium">Anti Piracy : JWLA031 (25th Apr 2023)</div>
      <div className="flex h-[22px] w-[296px] items-center justify-center border-l border-[#6f8fbf] font-medium">ECA : IMO, Each Country</div>
      <div className="flex h-[22px] flex-1 items-center justify-center border-l border-[#6f8fbf] pr-[76px] font-medium">Main Currency : USD</div>
    </footer>
  );
}

/* ---------- popups and notes over the sheet ---------- */

const PopBtn = ({ children, className }: { children: React.ReactNode; className: string }) => (
  <button className={clsx("flex items-center justify-center border-2 border-[#b9b9b9] bg-[#fdfdfd] whitespace-nowrap", className)}>{children}</button>
);

function CurrencyPopup() {
  return (
    <div className="absolute top-[331px] left-[478px] h-[143px] w-[404px] border-2 border-dashed border-[#f00] bg-[#e6e6e6] pt-[13px] pl-3.5 text-[16px] leading-5">
      <div className="flex text-center">
        <label htmlFor="cur" className="w-[93px]">Currency</label>
        <label htmlFor="amt" className="ml-2 w-[169px]">Amount</label>
      </div>
      <div className="mt-3 flex gap-[7px]">
        <div className="relative flex h-8 w-[94px] items-center border-2 border-[#b9b9b9] bg-white">
          <select id="cur" className="h-full w-full appearance-none pl-1.5 outline-none"><option>USD</option></select>
          <svg viewBox="0 0 12 7" className="pointer-events-none absolute right-1.5 h-[7px] w-3"><path d="M0 0h12L6 6.500z" fill="#333" /></svg>
        </div>
        <input id="amt" defaultValue="15,000.00" className="h-8 w-[170px] border-2 border-[#b9b9b9] bg-white pr-[5px] text-right outline-none" />
      </div>
      <div className="mt-[13px] flex">
        <div className="relative">
          <PopBtn className="h-9 w-[171px] gap-1"><Coins className="size-6" />Add Currency</PopBtn>
          <span className="pointer-events-none absolute top-[2px] -left-[4px] h-9 w-[179px] border-2 border-dashed border-[#f00]" />
        </div>
        <PopBtn className="ml-5 h-9 w-[87px]">OK</PopBtn>
        <PopBtn className="ml-1.5 h-9 w-[87px]">Cancel</PopBtn>
      </div>
    </div>
  );
}

function MultiCurrency() {
  return (
    <div className="absolute top-[603px] left-[373px] h-[350px] w-[549px] bg-[#e6e6e6] pl-[13px] text-[15px] leading-5">
      <div className="flex h-[52px] w-[523px] items-start justify-between pt-3">
        <span className="-ml-1.5 text-[#8a8a8a]">Multi Currency</span>
        <button aria-label="Close" className="mr-2.5 pt-0.5">
          <svg viewBox="0 0 14 14" className="size-[14px]" stroke="#777" strokeWidth="1.600"><path d="M1 1l12 12M13 1L1 13" /></svg>
        </button>
      </div>
      <div className="flex w-[523px] items-center gap-3">
        <h3 className="font-semibold">Exchange Rate</h3>
        <span className="h-px flex-1 bg-[#d2d2d2]" />
      </div>
      <div className="mt-1 flex h-7 w-[523px] items-center">
        <span className="w-[154px]">Main Currency</span>
        <span className="w-[141px] font-semibold">USD</span>
        <label htmlFor="base" className="w-[71px]">Amount</label>
        <input id="base" defaultValue="1,000.0" className="h-7 w-[157px] border-2 border-[#b9b9b9] bg-white pr-1 text-right outline-none" />
      </div>
      <table className="mt-1 w-[523px] table-fixed border-separate border-spacing-0 border-2 border-[#b9b9b9]">
        <Cols widths={[153, 154, 154, null]} />
        <thead><tr className="h-[26px]"><Th>Sub Currency</Th><Th>Rate</Th><Th>Amount</Th><Th /></tr></thead>
        <tbody className="bg-white">
          {[0, 1, 2, 3].map((i) => (
            <tr key={i} className="h-[27px]">
              <Td><div className="flex justify-end pr-0.5">{i === 0 && <Caret />}</div></Td>
              <Td /><Td />
              <Td>
                <div className="flex justify-center gap-3">
                  <button aria-label="Add row"><PlusSolid /></button>
                  <button aria-label="Remove row"><MinusSolid /></button>
                </div>
              </Td>
            </tr>
          ))}
        </tbody>
      </table>
      <div className="mt-2 flex h-8 w-[523px] items-center">
        <MouseIcon className="ml-1 h-10 w-7" />
        <p className="ml-[9px] text-[13px] leading-[19px] whitespace-pre">{'You can use multi currency by "Right\nClicking" while entering the amount.'}</p>
        <PopBtn className="ml-auto h-8 w-[141px]">Exchange Rate</PopBtn>
        <PopBtn className="ml-[7px] h-8 w-[83px]">Recent</PopBtn>
      </div>
      <div className="mt-[18px] flex w-[523px] justify-end gap-[7px]">
        <PopBtn className="h-8 w-[96px]">OK</PopBtn>
        <PopBtn className="h-8 w-[96px]">Cancel</PopBtn>
      </div>
      <span className="pointer-events-none absolute top-0 left-0 h-[356px] w-[544px] border-2 border-dashed border-[#f00]" />
    </div>
  );
}

const Note = ({ children, className }: { children: string; className: string }) => (
  <div className={clsx("absolute flex items-center border border-black bg-[#6e96c8] pt-0.5 pl-[14px] font-['DejaVu_Sans',sans-serif] text-[21px] leading-[25px] whitespace-pre text-black", className)}>
    {children}
  </div>
);

const Badge = ({ n, className }: { n: number; className: string }) => (
  <div className={clsx("absolute flex size-9 items-center justify-center rounded-full border border-[#1c2a3d] bg-[#7ba0d0] font-['DejaVu_Sans',sans-serif] text-[21px] font-bold text-white", className)}>
    {n}
  </div>
);

export default function App() {
  return (
    <div className="relative flex min-h-screen flex-col overflow-hidden bg-white p-px font-['Open_Sans','Noto_Sans',sans-serif] text-[11px] leading-4 text-[#444]">
      <div className="flex flex-1 flex-col border border-[#ababab] bg-[#e6e6e6]">
        <Header />
        <main className="flex-1 pr-[30px] pl-1.5">
          <div className="flex h-[27px] justify-end">
            <span className="flex w-[150px] items-center justify-end border border-t-0 border-[#b5b5b5] bg-[#f0f0f0] pr-2 text-[12px] font-semibold whitespace-nowrap">2024-06-17 13:52, erin</span>
          </div>
          <Vessel />
          <Cargo />
          <PortRotation />
          <Bottom />
        </main>
        <StatusBar />
      </div>

      <CurrencyPopup />
      <MultiCurrency />
      <MouseIcon bold className="absolute top-[709px] left-[1122px] h-12 w-[36px]" />
      <svg className="pointer-events-none absolute top-[272px] left-[1100px] h-[470px] w-[90px]" viewBox="0 0 90 470">
        <path d="M5 0l69 456" stroke="#000" strokeWidth="1.800" />
        <path d="M69 455l12-2-4 14z" fill="#000" />
      </svg>
      <Note className="top-[131px] left-[857px] h-[142px] w-[497px]">{"When you need to use Sub Currency, you\ncan pop up the Multi Currency window by\n“Right Clicking”.\nChoose Sub Currency you will use."}</Note>
      <Note className="top-[237px] left-[208px] h-[84px] w-[520px]">{"If you need, click “Add Currency” to add more\nSub Currencies you will use in the sheet."}</Note>
      <Note className="top-[757px] left-[290px] h-[83px] w-[521px]">{"Choose the “Sub Currency” and input the\nexchange rate. Click “OK”."}</Note>
      <Badge n={6} className="top-[119px] left-[845px]" />
      <Badge n={7} className="top-[308px] left-[468px]" />
      <Badge n={8} className="top-[580px] left-[360px]" />
    </div>
  );
}
